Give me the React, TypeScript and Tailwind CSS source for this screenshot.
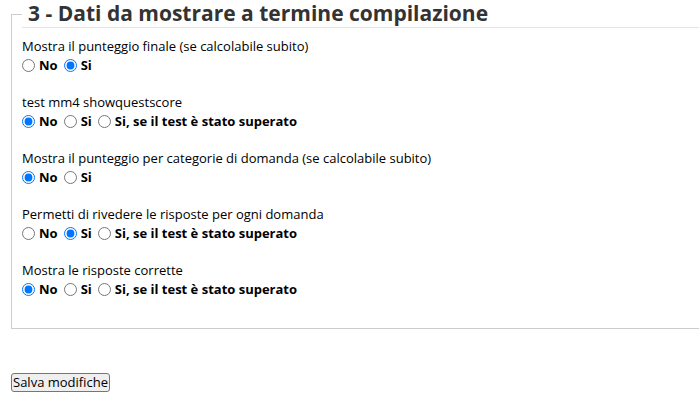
import React from "react";

type Opt = { label: string; checked: boolean };
type Group = { title: string; name: string; options: Opt[] };

const groups: Group[] = [
  {
    title: "Mostra il punteggio finale (se calcolabile subito)",
    name: "g1",
    options: [
      { label: "No", checked: false },
      { label: "Si", checked: true },
    ],
  },
  {
    title: "test mm4 showquestscore",
    name: "g2",
    options: [
      { label: "No", checked: true },
      { label: "Si", checked: false },
      { label: "Si, se il test è stato superato", checked: false },
    ],
  },
  {
    title: "Mostra il punteggio per categorie di domanda (se calcolabile subito)",
    name: "g3",
    options: [
      { label: "No", checked: true },
      { label: "Si", checked: false },
    ],
  },
  {
    title: "Permetti di rivedere le risposte per ogni domanda",
    name: "g4",
    options: [
      { label: "No", checked: false },
      { label: "Si", checked: true },
      { label: "Si, se il test è stato superato", checked: false },
    ],
  },
  {
    title: "Mostra le risposte corrette",
    name: "g5",
    options: [
      { label: "No", checked: true },
      { label: "Si", checked: false },
      { label: "Si, se il test è stato superato", checked: false },
    ],
  },
];

export default function App() {
  return (
    <div className="w-full overflow-hidden bg-white font-['Open_Sans',sans-serif] text-[13px] text-black">
      <fieldset className="ml-[11px] w-[720px] border border-[#cccccc] px-[10px] pb-[11px]">
        <legend className="w-full border-b border-[#e5e5e5] pl-[6px] text-[21px] font-bold leading-[27px] text-[#333333]">
          3 - Dati da mostrare a termine compilazione
        </legend>
        <div className="pt-[9px]">
          {groups.map((g) => (
            <div key={g.name} className="mb-[18px]">
              <div className="leading-[19px]">{g.title}</div>
              <div className="flex items-center leading-[19px]">
                {g.options.map((o, i) => (
                  <label key={i} className="mr-[6px] inline-flex items-center font-bold">
                    <input
                      type="radio"
                      name={g.name}
                      defaultChecked={o.checked}
                      className="m-0 mr-[4px] h-[13px] w-[13px]"
                    />
                    {o.label}
                  </label>
                ))}
              </div>
            </div>
          ))}
        </div>
      </fieldset>
      <div className="ml-[11px] mt-[44px] pb-[12px]">
        <button className="rounded-[3px] border border-[#767676] bg-[#efefef] px-[1px] py-0 font-['Open_Sans',sans-serif] text-[13px] leading-[17px] text-black">
          Salva modifiche
        </button>
      </div>
    </div>
  );
}
